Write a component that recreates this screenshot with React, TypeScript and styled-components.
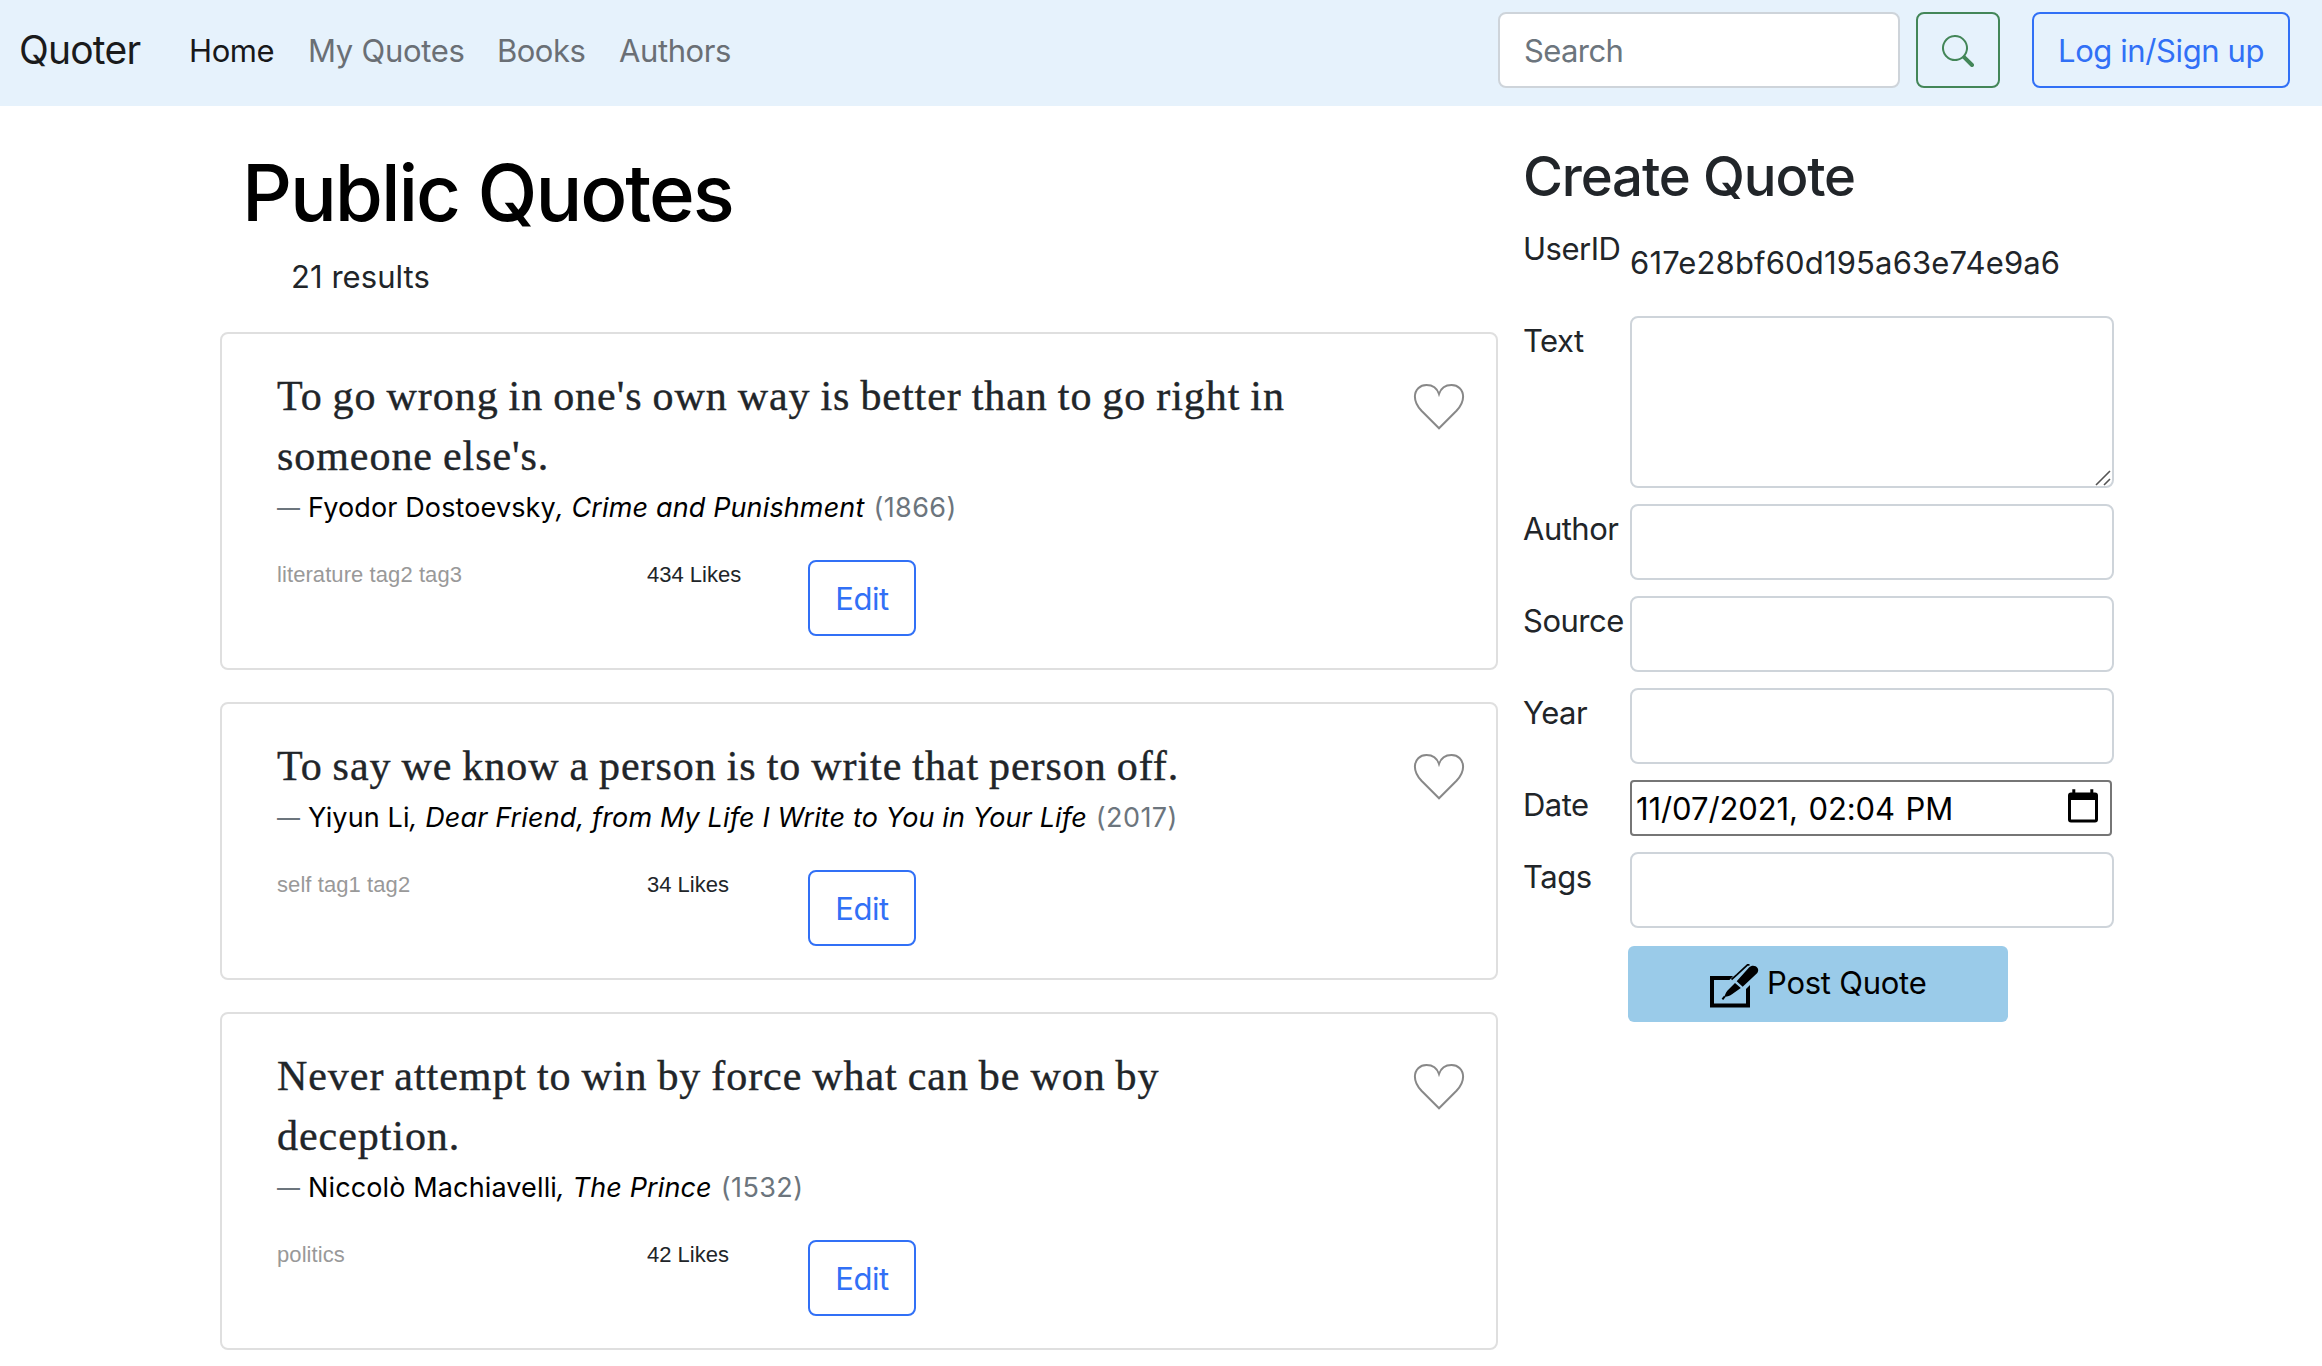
import React from "react";
import styled, { createGlobalStyle } from "styled-components";
import { BsSearch } from "react-icons/bs";

const GlobalStyle = createGlobalStyle`
  *, *::before, *::after { box-sizing: border-box; }
  body {
    margin: 0;
    background: #fff;
    color: #212529;
    font-family: Inter, "Liberation Sans", sans-serif;
    font-size: 31px;
    line-height: 48px;
    overflow: hidden;
  }
`;

const Navbar = styled.nav`
  display: flex;
  align-items: flex-start;
  height: 106px;
  padding: 12px 32px 0 19px;
  background: #e6f2fc;
`;

const Brand = styled.a`
  width: 170px;
  font-size: 39px;
  line-height: 60px;
  padding-top: 8px;
  letter-spacing: -0.8px;
  color: #1a1b1c;
`;

const NavLinks = styled.div`
  display: flex;
  flex: 1;
  gap: 32px;
  padding-top: 15px;
`;

const NavLink = styled.a<{ $active?: boolean; $width: number; $track: number }>`
  width: ${(p) => p.$width}px;
  white-space: nowrap;
  letter-spacing: ${(p) => p.$track}px;
  color: ${(p) => (p.$active ? "#17181a" : "#6a6f75")};
`;

const Control = styled.input`
  display: block;
  width: 484px;
  height: 76px;
  padding: 12px 24px;
  border: 2px solid #ced4da;
  border-radius: 8px;
  background: #fff;
  font: inherit;
  color: inherit;
  outline: none;
`;

const SearchInput = styled(Control)`
  width: 402px;
  margin-right: 16px;
  letter-spacing: -0.6px;
  &::placeholder { color: #6c757d; opacity: 1; }
`;

const OutlineButton = styled.button<{ $color: string; $width: number }>`
  display: flex;
  align-items: center;
  justify-content: center;
  width: ${(p) => p.$width}px;
  height: 76px;
  padding: 1px 0 0;
  border: 2px solid ${(p) => p.$color};
  border-radius: 8px;
  background: transparent;
  font: inherit;
  letter-spacing: -0.4px;
  white-space: nowrap;
  color: ${(p) => p.$color};
`;

const LoginButton = styled(OutlineButton)`
  margin-left: 32px;
`;

const Page = styled.main`
  display: flex;
  gap: 25px;
  padding-left: 220px;
`;

const QuoteColumn = styled.section`
  width: 1278px;
  padding-top: 38px;
`;

const Title = styled.h1`
  margin: 0;
  padding-left: 22px;
  font-size: 78px;
  line-height: 98px;
  font-weight: 500;
  letter-spacing: -2.1px;
  color: #000;
`;

const ResultCount = styled.p`
  margin: 11px 0 31px 71px;
  letter-spacing: 0.05px;
`;

const Card = styled.article`
  display: flex;
  justify-content: space-between;
  margin-bottom: 32px;
  padding: 32px 32px 32px 55px;
  border: 2px solid #dfdfdf;
  border-radius: 8px;
`;

const QuoteText = styled.blockquote`
  margin: 0;
  font-family: "Liberation Serif", serif;
  font-size: 42px;
  line-height: 60px;
  white-space: pre-line;
  letter-spacing: 0.95px;
  word-spacing: -1.45px;
  -webkit-text-stroke: 0.4px currentColor;
`;

const Attribution = styled.div`
  display: flex;
  padding-top: 1px;
  font-size: 27px;
  line-height: 42px;
  white-space: pre;
  color: #6c757d;
`;

const Dash = styled.span`
  width: 31px;
  font-size: 23px;
`;

const Source = styled.span`
  letter-spacing: 0.13px;
  color: #000;
`;

const Year = styled.span`
  padding-left: 9px;
  letter-spacing: 0.4px;
`;

const CardFooter = styled.div`
  display: flex;
  align-items: flex-start;
  margin-top: 31px;
  font-family: "Liberation Sans", sans-serif;
  font-size: 22px;
  line-height: 28px;
`;

const Tags = styled.span`
  width: 370px;
  padding-top: 1px;
  letter-spacing: 0.08px;
  color: #999;
`;

const Likes = styled.span`
  width: 161px;
  padding-top: 1px;
`;

const EditButton = styled(OutlineButton)`
  font-family: Inter, sans-serif;
  font-size: 31px;
`;

const Heart = styled.svg`
  width: 50px;
  height: 46px;
  margin-top: 18px;
  overflow: visible;
`;

const FormColumn = styled.aside`
  width: 592px;
  padding-top: 37px;
`;

const FormTitle = styled.h2`
  margin: 0;
  padding-bottom: 14px;
  font-size: 54.5px;
  line-height: 67px;
  font-weight: 500;
  letter-spacing: -1.15px;
`;

const Row = styled.div`
  display: flex;
  margin-bottom: 16px;
`;

const Label = styled.label`
  width: 107px;
  padding-top: 1px;
  letter-spacing: -0.5px;
`;

const UserId = styled.span`
  height: 76px;
  padding: 15px 0 13px;
  letter-spacing: 0.16px;
`;

const TextAreaFrame = styled.div`
  position: relative;
`;

const TextArea = styled(Control).attrs({ as: "textarea" })`
  height: 172px;
  resize: none;
`;

const ResizeGrip = styled.svg`
  position: absolute;
  right: 3px;
  bottom: 2px;
  width: 16px;
  height: 16px;
`;

const DateField = styled.div`
  display: flex;
  align-items: center;
  justify-content: space-between;
  width: 482px;
  height: 56px;
  padding: 1px 12px 0 4px;
  border: 2px solid #767676;
  border-radius: 4px;
  letter-spacing: -0.1px;
  word-spacing: 2px;
  color: #000;
`;

const CalendarIcon = styled.svg`
  width: 30px;
  height: 34px;
  margin-bottom: 5px;
`;

const PostButton = styled.button`
  display: flex;
  align-items: center;
  gap: 7px;
  width: 380px;
  height: 76px;
  margin: 18px 0 0 105px;
  padding: 0 0 0 82px;
  border: 0;
  border-radius: 6px;
  background: #9acbe9;
  font: inherit;
  letter-spacing: -0.25px;
  color: #000;
`;

const PostLabel = styled.span`
  padding-bottom: 2px;
`;

const PenIcon = styled.svg`
  width: 50px;
  height: 44px;
  margin-top: 4px;
  overflow: visible;
`;

interface Quote {
  text: string;
  author: string;
  source: string;
  year: number;
  tags: string;
  likes: number;
}

const quotes: Quote[] = [
  {
    text: "To go wrong in one's own way is better than to go right in\nsomeone else's.",
    author: "Fyodor Dostoevsky",
    source: "Crime and Punishment",
    year: 1866,
    tags: "literature tag2 tag3",
    likes: 434,
  },
  {
    text: "To say we know a person is to write that person off.",
    author: "Yiyun Li",
    source: "Dear Friend, from My Life I Write to You in Your Life",
    year: 2017,
    tags: "self tag1 tag2",
    likes: 34,
  },
  {
    text: "Never attempt to win by force what can be won by\ndeception.",
    author: "Niccolò Machiavelli",
    source: "The Prince",
    year: 1532,
    tags: "politics",
    likes: 42,
  },
];

const BLUE = "#3170f6";

function QuoteCard({ quote }: { quote: Quote }) {
  return (
    <Card>
      <div>
        <QuoteText>{quote.text}</QuoteText>
        <Attribution>
          <Dash>—</Dash>
          <Source>{quote.author}<i>, {quote.source}</i></Source>
          <Year>({quote.year})</Year>
        </Attribution>
        <CardFooter>
          <Tags>{quote.tags}</Tags>
          <Likes>{quote.likes} Likes</Likes>
          <EditButton $color={BLUE} $width={108}>Edit</EditButton>
        </CardFooter>
      </div>
      <Heart viewBox="14 14 50 46" fill="none" stroke="#888" strokeWidth="2">
        <path d="M39 58.3L21.5 40.8C16.5 35.5 14.9 31 14.9 26.8C14.9 19.5 20 15 26.5 15C32 15 37 18 39 24C41 18 46 15 51.5 15C58 15 63.1 19.5 63.1 26.8C63.1 31 61.5 35.5 56.5 40.8Z" />
      </Heart>
    </Card>
  );
}

export default function App() {
  return (
    <>
      <GlobalStyle />
      <Navbar>
        <Brand>Quoter</Brand>
        <NavLinks>
          <NavLink $active $width={87} $track={-0.4}>Home</NavLink>
          <NavLink $width={157} $track={-0.28}>My Quotes</NavLink>
          <NavLink $width={90} $track={-0.5}>Books</NavLink>
          <NavLink $width={114} $track={-0.4}>Authors</NavLink>
        </NavLinks>
        <SearchInput placeholder="Search" />
        <OutlineButton $color="#438658" $width={84}>
          <BsSearch size={32} />
        </OutlineButton>
        <LoginButton $color={BLUE} $width={258}>Log in/Sign up</LoginButton>
      </Navbar>
      <Page>
        <QuoteColumn>
          <Title>Public Quotes</Title>
          <ResultCount>21 results</ResultCount>
          {quotes.map((q) => <QuoteCard key={q.author} quote={q} />)}
        </QuoteColumn>
        <FormColumn>
          <FormTitle>Create Quote</FormTitle>
          <Row><Label>UserID</Label><UserId>617e28bf60d195a63e74e9a6</UserId></Row>
          <Row>
            <Label>Text</Label>
            <TextAreaFrame>
              <TextArea />
              <ResizeGrip viewBox="0 0 16 16" stroke="#555" strokeWidth="1.6">
                <path d="M1 15L15 1M9 15L15 9" />
              </ResizeGrip>
            </TextAreaFrame>
          </Row>
          <Row><Label>Author</Label><Control /></Row>
          <Row><Label>Source</Label><Control /></Row>
          <Row><Label>Year</Label><Control /></Row>
          <Row>
            <Label>Date</Label>
            <DateField>
              11/07/2021, 02:04 PM
              <CalendarIcon viewBox="0 0 30 34">
                <path d="M1.5 9V30.5A1.5 1.5 0 0 0 3 32H27A1.5 1.5 0 0 0 28.5 30.5V9" fill="none" stroke="#000" strokeWidth="3" />
                <path d="M0 11V6.5A3 3 0 0 1 3 3.5H27A3 3 0 0 1 30 6.5V11ZM4.3 0.3H7.3V4H4.3ZM22.3 0.3H25.3V4H22.3Z" />
              </CalendarIcon>
            </DateField>
          </Row>
          <Row><Label>Tags</Label><Control /></Row>
          <PostButton>
            <PenIcon viewBox="0 0 50 44">
              <path d="M0 12H23L19.5 16H4V39.5H36V25L40 21V43.5H0Z" />
              <path d="M26.7 17.3L39 3.6C43 -1 51 3.5 47.3 9L32.7 22.7Z" />
              <path d="M25 18.9L17.5 26.5C15.5 29 15 31 14.3 33C18 32.6 20 31.8 22 30.3L30.8 23.9Z" />
              <path d="M21.5 15.5L27 10.7L37.5 0.8H39.5" fill="none" stroke="#000" strokeWidth="1.7" />
              <path d="M14.8 32.4L12.4 35.4" stroke="#000" strokeWidth="2" />
            </PenIcon>
            <PostLabel>Post Quote</PostLabel>
          </PostButton>
        </FormColumn>
      </Page>
    </>
  );
}
